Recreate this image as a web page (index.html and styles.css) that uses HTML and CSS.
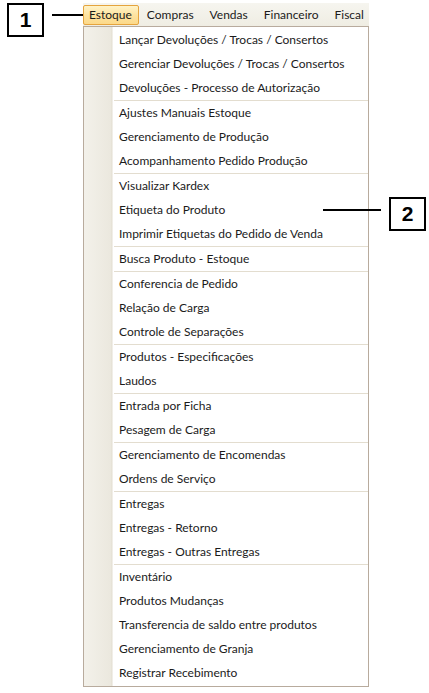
FILE: index.html
```html
<!DOCTYPE html>
<html lang="pt-BR">
<head>
<meta charset="utf-8">
<title>Menu Estoque</title>
<link rel="stylesheet" href="styles.css">
</head>
<body>
<div class="stage">
  <div class="menu">
    <div class="menubar">
      <span class="mb-item active">Estoque</span>
      <span class="mb-item">Compras</span>
      <span class="mb-item">Vendas</span>
      <span class="mb-item">Financeiro</span>
      <span class="mb-item">Fiscal</span>
    </div>
    <div class="dropdown">
      <div class="item">Lançar Devoluções / Trocas / Consertos</div>
      <div class="item">Gerenciar Devoluções / Trocas / Consertos</div>
      <div class="item">Devoluções - Processo de Autorização</div>
      <div class="sep"></div>
      <div class="item">Ajustes Manuais Estoque</div>
      <div class="item">Gerenciamento de Produção</div>
      <div class="item">Acompanhamento Pedido Produção</div>
      <div class="sep"></div>
      <div class="item">Visualizar Kardex</div>
      <div class="item">Etiqueta do Produto</div>
      <div class="item">Imprimir Etiquetas do Pedido de Venda</div>
      <div class="sep"></div>
      <div class="item">Busca Produto - Estoque</div>
      <div class="sep"></div>
      <div class="item">Conferencia de Pedido</div>
      <div class="item">Relação de Carga</div>
      <div class="item">Controle de Separações</div>
      <div class="sep"></div>
      <div class="item">Produtos - Especificações</div>
      <div class="item">Laudos</div>
      <div class="sep"></div>
      <div class="item">Entrada por Ficha</div>
      <div class="item">Pesagem de Carga</div>
      <div class="sep"></div>
      <div class="item">Gerenciamento de Encomendas</div>
      <div class="item">Ordens de Serviço</div>
      <div class="sep"></div>
      <div class="item">Entregas</div>
      <div class="item">Entregas - Retorno</div>
      <div class="item">Entregas - Outras Entregas</div>
      <div class="sep"></div>
      <div class="item">Inventário</div>
      <div class="item">Produtos Mudanças</div>
      <div class="item">Transferencia de saldo entre produtos</div>
      <div class="item">Gerenciamento de Granja</div>
      <div class="item">Registrar Recebimento</div>
    </div>
  </div>

  <div class="callout callout-1">1</div>
  <div class="leader leader-1"></div>
  <div class="callout callout-2">2</div>
  <div class="leader leader-2"></div>
</div>
</body>
</html>
```
FILE: styles.css
```css
* { box-sizing: border-box; }
html, body { margin: 0; padding: 0; background: #fff; }
body { width: 429px; height: 693px; overflow: hidden; }

.stage {
  position: relative;
  width: 429px;
  height: 693px;
  padding: 3px 0 0 83px;
  font-family: "Lato", "Open Sans", sans-serif;
  font-size: 12px;
  color: #1b1b1b;
}

.menu { width: 286px; display: flex; flex-direction: column; }

.menubar {
  height: 23px;
  display: flex;
  align-items: center;
  background: linear-gradient(#f6f5ef, #efede3);
}
.mb-item {
  height: 20px;
  line-height: 18px;
  padding: 0 7px;
  border: 1px solid transparent;
}
.mb-item.active {
  padding: 0 6px 0 5px;
  border-color: #e5a43e;
  border-radius: 2px;
  background: linear-gradient(#fff3c8, #fde3a0 50%, #fcd98a);
}

.dropdown {
  border: 1px solid #b8ab9d;
  padding: 1px 0;
  background: linear-gradient(to right, #f3f1ea 0, #ebe8de 27px, #e2ddd0 28px, #ffffff 29px, #ffffff 100%);
  display: flex;
  flex-direction: column;
}
.item {
  height: 24px;
  line-height: 24px;
  padding-left: 35px;
  white-space: nowrap;
}
.sep {
  height: 1px;
  margin-left: 30px;
  background: #e3ddcf;
}

.callout {
  position: absolute;
  border: 2px solid #000;
  background: #fff;
  font-family: "Liberation Sans", Arial, sans-serif;
  font-weight: bold;
  font-size: 21px;
  color: #000;
  display: flex;
  align-items: center;
  justify-content: center;
}
.callout-1 { left: 7px; top: 3px; width: 37px; height: 34px; }
.callout-2 { left: 389px; top: 197px; width: 37px; height: 34px; }

.leader { position: absolute; height: 2px; background: #000; }
.leader-1 { left: 52px; top: 14px; width: 31px; }
.leader-2 { left: 323px; top: 209px; width: 58px; }
```
